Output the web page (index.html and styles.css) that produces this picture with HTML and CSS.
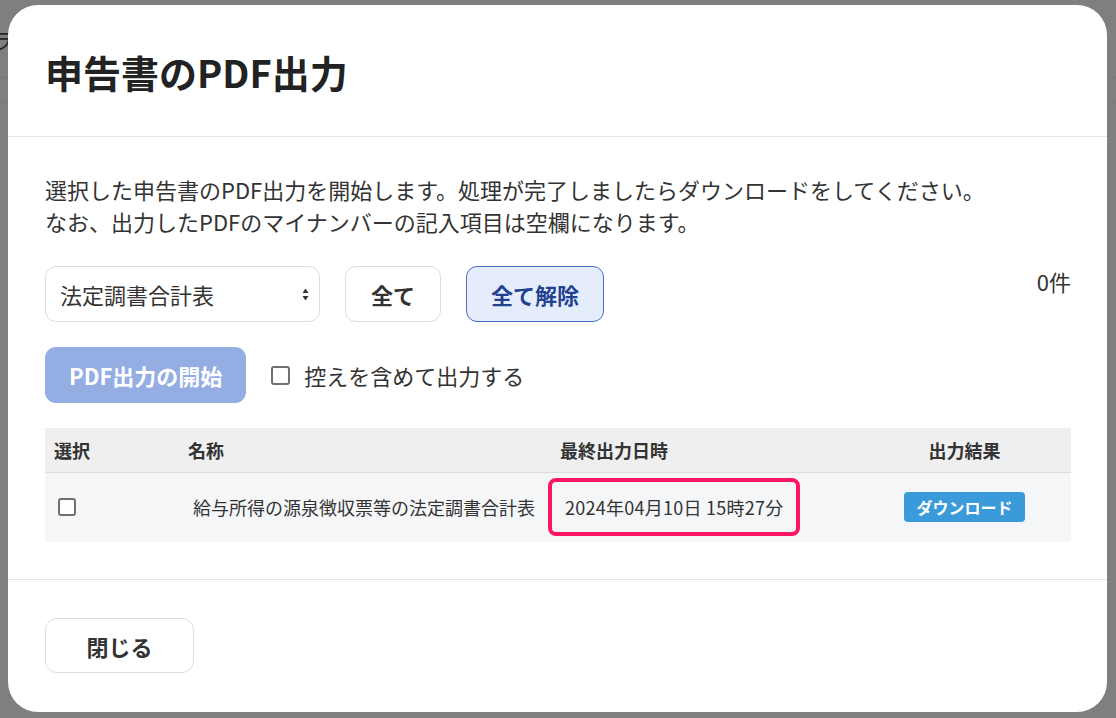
FILE: index.html
```html
<!DOCTYPE html>
<html lang="ja">

<head>
  <meta charset="UTF-8">
  <meta name="viewport" content="width=device-width, initial-scale=1.0">
  <title>申告書のPDF出力</title>
  <link rel="stylesheet" href="styles.css">
</head>

<body>
  <div class="page">
    <div class="page-top"><span class="page-mark">ラ</span></div>
    <div class="page-sub"></div>
  </div>

  <div class="overlay">
    <div class="modal">
      <div class="modal-header">
        <h1 class="modal-title">申告書のPDF出力</h1>
      </div>

      <div class="modal-body">
        <p class="lead">選択した申告書のPDF出力を開始します。処理が完了しましたらダウンロードをしてください。<br>なお、出力したPDFのマイナンバーの記入項目は空欄になります。</p>

        <div class="controls">
          <div class="select-wrap">
            <select class="select">
              <option>法定調書合計表</option>
            </select>
            <svg class="select-arrows" width="7" height="13" viewBox="0 0 7 13">
              <path d="M3.5 0.5 L6.5 5 L0.5 5 Z" fill="#333" />
              <path d="M3.5 12.5 L6.5 8 L0.5 8 Z" fill="#333" />
            </svg>
          </div>
          <button class="btn">全て</button>
          <button class="btn btn-active">全て解除</button>
          <span class="count">0件</span>
        </div>

        <div class="controls-2">
          <button class="btn btn-primary" disabled>PDF出力の開始</button>
          <label class="check-label"><input type="checkbox" class="check">控えを含めて出力する</label>
        </div>

        <table class="list">
          <colgroup>
            <col style="width: 134px">
            <col style="width: 372px">
            <col style="width: 307px">
            <col style="width: 213px">
          </colgroup>
          <thead>
            <tr>
              <th>選択</th>
              <th>名称</th>
              <th>最終出力日時</th>
              <th class="center">出力結果</th>
            </tr>
          </thead>
          <tbody>
            <tr>
              <td class="cell-check"><input type="checkbox" class="check"></td>
              <td class="cell-name">給与所得の源泉徴収票等の法定調書合計表</td>
              <td class="cell-date"><span class="mark">2024年04月10日 15時27分</span></td>
              <td class="center"><span class="badge">ダウンロード</span></td>
            </tr>
          </tbody>
        </table>
      </div>

      <div class="modal-footer">
        <button class="btn btn-close">閉じる</button>
      </div>
    </div>
  </div>
</body>

</html>
```

FILE: styles.css
```css
* {
  box-sizing: border-box;
  margin: 0;
  padding: 0;
}

html, body {
  width: 1116px;
  height: 718px;
  overflow: hidden;
  background-color: #7f7f7f;
  font-family: "Noto Sans CJK JP", "Noto Sans", sans-serif;
  color: #333;
}

.page-top {
  height: 78px;
  border-bottom: 1px solid #777;
}

.page-mark {
  display: inline-block;
  margin: 26px 0 0 -9px;
  font-size: 22px;
  line-height: 26px;
  color: #262626;
}

.page-sub {
  height: 25px;
  border-bottom: 1px solid #777;
}

.overlay {
  position: absolute;
  top: 0;
  left: 0;
  width: 1116px;
  height: 718px;
}

.modal {
  position: absolute;
  left: 8px;
  top: 5px;
  width: 1099px;
  height: 707px;
  background-color: #fff;
  border-radius: 30px;
  overflow: hidden;
  display: flex;
  flex-direction: column;
}

.modal-header {
  height: 132px;
  padding: 44px 37px 0;
  border-bottom: 1px solid #e4e4e4;
}

.modal-title {
  font-size: 38px;
  line-height: 46px;
  font-weight: 700;
  color: #222;
}

.modal-body {
  padding: 36px 36px 37px 37px;
  border-bottom: 1px solid #e4e4e4;
}

.lead {
  font-size: 22px;
  line-height: 32px;
}

.controls {
  display: flex;
  align-items: flex-start;
  gap: 25px;
  margin-top: 29px;
}

.select-wrap {
  position: relative;
  width: 275px;
  height: 56px;
}

.select {
  appearance: none;
  width: 100%;
  height: 100%;
  border: 1px solid #dcdcdc;
  border-radius: 11px;
  background: #fff;
  padding: 0 14px;
  font-family: inherit;
  font-size: 22px;
  color: #333;
}

.select-arrows {
  position: absolute;
  right: 11px;
  top: 22px;
}

.btn {
  height: 56px;
  padding: 0 25px;
  border: 1px solid #dcdcdc;
  border-radius: 11px;
  background: #fff;
  font-family: inherit;
  font-size: 22px;
  font-weight: 700;
  color: #333;
}

.btn-active {
  padding: 0 24px;
  background-color: #e5edfd;
  border-color: #4a6cc2;
  color: #22418f;
}

.btn-primary {
  padding: 0 24px;
  border: none;
  background-color: #94aee4;
  color: #fff;
}

.count {
  margin-left: auto;
  font-size: 22px;
  line-height: 30px;
}

.controls-2 {
  display: flex;
  align-items: center;
  gap: 25px;
  margin-top: 25px;
}

.check-label {
  display: flex;
  align-items: center;
  gap: 14px;
  font-size: 22px;
  line-height: 30px;
}

.check {
  appearance: none;
  width: 19px;
  height: 19px;
  border: 2px solid #707070;
  border-radius: 3px;
  background: #fff;
}

.list {
  width: 100%;
  margin-top: 25px;
  border-collapse: collapse;
  table-layout: fixed;
}

.list th {
  height: 44px;
  padding: 0 9px;
  background-color: #efefef;
  border-bottom: 1px solid #dddddd;
  font-size: 18px;
  font-weight: 700;
  text-align: left;
}

.list td {
  height: 70px;
  padding: 0 9px;
  background-color: #f5f6f8;
  font-size: 18px;
}

.list .center {
  text-align: center;
}

.cell-check {
  padding-left: 13px !important;
}

.cell-check .check {
  display: block;
  width: 18px;
  height: 18px;
}

.cell-name {
  padding-left: 14px !important;
  white-space: nowrap;
}

.cell-date {
  padding-left: 0 !important;
}

.mark {
  display: inline-block;
  margin-left: -3px;
  padding: 13px 13px;
  line-height: 24px;
  letter-spacing: 0.25px;
  border: 4px solid #ff1464;
  border-radius: 8px;
  white-space: nowrap;
}

.badge {
  display: inline-block;
  padding: 0 12px;
  height: 30px;
  line-height: 30px;
  border-radius: 4px;
  background-color: #3b9ad9;
  color: #fff;
  font-size: 16px;
  font-weight: 700;
}

.modal-footer {
  padding: 38px 37px;
}

.btn-close {
  width: 149px;
  height: 55px;
  border-radius: 12px;
}
```
